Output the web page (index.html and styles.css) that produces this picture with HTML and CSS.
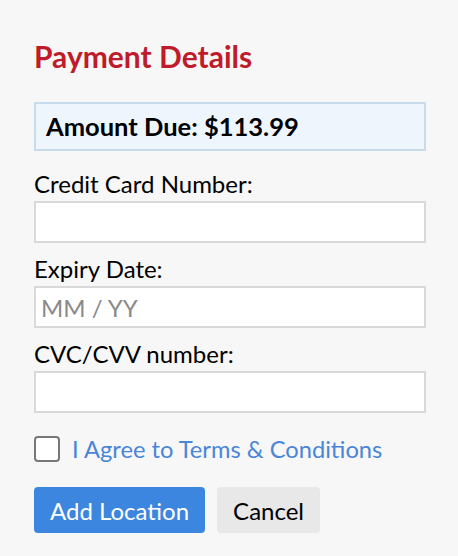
FILE: index.html
```html
<!DOCTYPE html>
<html lang="en">
<head>
    <meta charset="UTF-8">
    <meta name="viewport" content="width=device-width, initial-scale=1.0">
    <title>Payment Details</title>
    <link rel="stylesheet" href="styles.css">
</head>
<body>
    <form class="payment" id="formPayment">
        <h2 class="title">Payment Details</h2>

        <div class="amount">Amount Due: $113.99</div>

        <label for="card">Credit Card Number:</label>
        <input type="text" id="card" name="card">

        <label for="expiry">Expiry Date:</label>
        <input type="text" id="expiry" name="expiry" placeholder="MM / YY">

        <label for="cvc">CVC/CVV number:</label>
        <input type="text" id="cvc" name="cvc">

        <div class="agree">
            <input type="checkbox" id="terms" name="terms">
            <label for="terms">I Agree to Terms &amp; Conditions</label>
        </div>

        <div class="actions">
            <button type="submit" class="btn btn-primary">Add Location</button>
            <button type="button" class="btn btn-default">Cancel</button>
        </div>
    </form>
</body>
</html>
```

FILE: styles.css
```css
body {
    font-family: Lato, 'Open Sans', sans-serif;
    background-color: #f7f7f7;
    margin: 0;
    padding: 0;
    color: #000;
}

.payment {
    padding: 38px 32px 0 34px;
}

.title {
    color: #c01b2a;
    font-size: 30px;
    font-weight: bold;
    line-height: 36px;
    margin: 0 0 28px;
}

.amount {
    background-color: #eef5fc;
    border: 2px solid #c6dcec;
    font-size: 25.5px;
    font-weight: bold;
    line-height: 45px;
    padding: 0 10px;
    margin-bottom: 21px;
}

label {
    display: block;
    font-size: 24px;
    line-height: 24px;
    margin-bottom: 5px;
}

input[type="text"] {
    display: block;
    width: 100%;
    height: 42px;
    box-sizing: border-box;
    border: 2px solid #d9d9d9;
    background-color: #fff;
    font-family: inherit;
    font-size: 24px;
    padding: 0 5px;
    margin: 0 0 14px;
    outline: none;
}

input::placeholder {
    color: #8a8a8a;
}

.agree {
    display: flex;
    align-items: center;
    margin-top: 23px;
}

.agree input[type="checkbox"] {
    appearance: none;
    width: 26px;
    height: 26px;
    box-sizing: border-box;
    border: 2px solid #777;
    border-radius: 4px;
    background-color: #fff;
    margin: 0 12px 0 0;
}

.agree label {
    color: #4a86d8;
    font-size: 23.7px;
    margin: 0;
}

.actions {
    display: flex;
    gap: 12px;
    margin-top: 25px;
}

.btn {
    font-family: inherit;
    font-size: 24px;
    height: 46px;
    border: none;
    border-radius: 4px;
    padding: 0 16px;
    cursor: pointer;
}

.btn-primary {
    background-color: #3d86e0;
    color: #fff;
}

.btn-default {
    background-color: #e8e8e8;
    color: #000;
}
```
